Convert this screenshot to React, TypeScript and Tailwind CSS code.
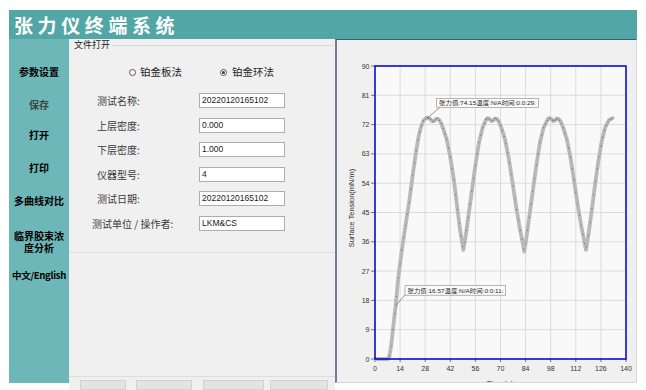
import React from "react";

const KP: [number, number][] = [
  [0, 0], [7.3, 0], [8, 0.8], [9, 4], [10, 9], [11.5, 16.3], [13, 25], [15, 33.5], [17, 41], [19, 48],
  [21.4, 58], [23, 64], [24.2, 68], [25.5, 71], [27, 73.2], [28.8, 74.15], [30, 74], [31, 73.6], [32, 73],
  [33, 73.1], [34, 73.7], [35, 73.8], [36, 73.3], [37, 72.3], [38, 70.8], [40, 67.5], [42, 62], [44, 55],
  [46, 46], [47.5, 39.5], [49.3, 33.5], [50.5, 37.5], [52, 43.5], [54, 51.5], [56, 59.5], [58, 66.5],
  [60, 71], [62, 73.6], [63, 74], [64, 73.6], [65, 73.1], [66, 73.3], [67, 73.9], [68, 73.7], [69, 73],
  [70.5, 71], [72.5, 67.5], [74.5, 62], [76.5, 55], [78.5, 47.5], [80.5, 41], [83.3, 33], [84.5, 37.5],
  [86, 43.5], [88, 51.5], [90, 59.5], [92, 66.5], [94, 71], [96.5, 73.8], [97.5, 74], [98.5, 73.6],
  [99.5, 73.1], [100.5, 73.3], [101.5, 73.9], [102.5, 73.7], [103.5, 73], [105, 71], [107, 67.5],
  [109, 62], [111, 55], [113, 47.5], [115, 41], [117.7, 33.5], [119, 38], [120.5, 44], [122.5, 52.5],
  [124.5, 60.5], [126.5, 67], [128.5, 71.3], [130.5, 73.4], [132.5, 74],
];

const X = (t: number) => 375 + (t * 251) / 140;
const Y = (v: number) => 359 - (v * 293) / 90;

function interp(t: number) {
  for (let i = 0; i < KP.length - 1; i++) {
    const [t0, v0] = KP[i];
    const [t1, v1] = KP[i + 1];
    if (t >= t0 && t <= t1) return v0 + ((v1 - v0) * (t - t0)) / (t1 - t0);
  }
  return KP[KP.length - 1][1];
}

const linePts = KP.map(([t, v]) => `${X(t).toFixed(2)},${Y(v).toFixed(2)}`).join(" ");
const dots: number[] = [];
for (let t = 0; t <= 132; t += 1) dots.push(t);

function Chart() {
  const yTicks = [0, 9, 18, 27, 36, 45, 54, 63, 72, 81, 90];
  const xTicks = [0, 14, 28, 42, 56, 70, 84, 98, 112, 126, 140];
  const font = "'Liberation Sans', 'Noto Sans CJK SC', sans-serif";
  return (
    <svg width={299} height={342} viewBox="337 40 299 342" className="block" style={{ fontFamily: font }}>
      <rect x={375} y={66} width={251} height={293} fill="#f9f9f9" />
      {xTicks.map((t) => (
        <line key={"gx" + t} x1={X(t)} x2={X(t)} y1={66} y2={359} stroke="#dcdcdc" strokeWidth={1} />
      ))}
      {yTicks.map((v) => (
        <line key={"gy" + v} x1={375} x2={626} y1={Y(v)} y2={Y(v)} stroke="#dcdcdc" strokeWidth={1} />
      ))}
      {yTicks.map((v) => (
        <g key={"ly" + v}>
          <line x1={371} x2={375} y1={Y(v)} y2={Y(v)} stroke="#555" strokeWidth={0.8} />
          <text x={369.5} y={Y(v) + 2.5} fontSize={7} fill="#333" textAnchor="end">
            {v}
          </text>
        </g>
      ))}
      {xTicks.map((t) => (
        <g key={"lx" + t}>
          <line x1={X(t)} x2={X(t)} y1={359} y2={362} stroke="#555" strokeWidth={0.8} />
          <text x={X(t)} y={370.8} fontSize={7} fill="#333" textAnchor="middle">
            {t}
          </text>
        </g>
      ))}
      <polyline points={linePts} fill="none" stroke="#b8b8b8" strokeWidth={3.8} strokeLinejoin="round" strokeLinecap="round" />
      {dots.map((t) => (
        <circle key={"d" + t} cx={X(t)} cy={Y(interp(t))} r={0.6} fill="#6e6e6e" />
      ))}
      <rect x={375} y={66} width={251} height={293} fill="none" stroke="#0000d0" strokeWidth={1.5} />

      <line x1={440} y1={107.3} x2={427} y2={118.3} stroke="#555" strokeWidth={0.6} />
      <rect x={436.7} y={98.3} width={101.6} height={9} fill="#fbfbfb" stroke="#888" strokeWidth={0.6} />
      <text x={439} y={105.2} fontSize={6} fill="#222" textLength={97} lengthAdjust="spacingAndGlyphs">
        张力值:74.15温度:N/A时间:0:0:29:
      </text>

      <line x1={407.7} y1={291.5} x2={395.7} y2={306} stroke="#555" strokeWidth={0.6} />
      <rect x={405} y={285.7} width={100.7} height={9.5} fill="#fbfbfb" stroke="#888" strokeWidth={0.6} />
      <text x={407.5} y={292.8} fontSize={6} fill="#222" textLength={96} lengthAdjust="spacingAndGlyphs">
        张力值:16.57温度:N/A时间:0:0:11:
      </text>

      <text x={352.5} y={208} fontSize={7.5} fill="#333" textAnchor="middle" transform="rotate(-90 352.5 208)" dominantBaseline="middle">
        Surface Tension(mN/m)
      </text>
      <text x={500} y={386} fontSize={8} fill="#333" textAnchor="middle">
        Time(s)
      </text>
    </svg>
  );
}

function Radio({ checked }: { checked?: boolean }) {
  return (
    <span className="w-[7px] h-[7px] rounded-full border border-[#555] bg-white flex items-center justify-center shrink-0">
      {checked && <span className="w-[3px] h-[3px] rounded-full bg-[#333]" />}
    </span>
  );
}

const rows: { label: string; value: string; last?: boolean }[] = [
  { label: "测试名称:", value: "20220120165102" },
  { label: "上层密度:", value: "0.000" },
  { label: "下层密度:", value: "1.000" },
  { label: "仪器型号:", value: "4" },
  { label: "测试日期:", value: "20220120165102" },
  { label: "测试单位 / 操作者:", value: "LKM&CS", last: true },
];

export default function App() {
  return (
    <div className="w-[646px] h-[390px] bg-white overflow-hidden font-['Noto_Sans_CJK_SC',sans-serif]">
      <div className="ml-[9px] pt-[10px] w-[628px]">
        <header className="h-[29px] bg-[#53a6a6] flex items-center pl-[5px]">
          <h1 className="text-white text-[19px] font-bold tracking-[4.6px] leading-none">张力仪终端系统</h1>
        </header>
        <div className="flex h-[351px] items-start">
          <nav className="w-[60px] h-[344px] bg-[#6db7b8] flex flex-col items-center text-[10px] font-bold leading-[12px] text-black text-center">
            <div className="mt-[27px]">参数设置</div>
            <div className="mt-[21px] text-[#3c4646]">保存</div>
            <div className="mt-[18px]">打开</div>
            <div className="mt-[21px]">打印</div>
            <div className="mt-[21px]">多曲线对比</div>
            <div className="mt-[22.5px] flex flex-col items-center">
              <span className="leading-[12.5px]">临界胶束浓</span>
              <span className="leading-[12.5px]">度分析</span>
            </div>
            <div className="mt-[14px] whitespace-nowrap text-[9.5px] tracking-[-0.3px]">中文/English</div>
          </nav>

          <main className="w-[266px] h-[351px] bg-[#f0f0f0] flex flex-col overflow-hidden">
            <div className="h-[12px] flex items-center pl-[5px]">
              <span className="text-[9px] leading-[12px] text-[#222]">文件打开</span>
              <span className="flex-1 h-px bg-[#dadada] ml-[2px] mr-[2px]" />
            </div>
            <div className="mt-[14px] h-[14px] flex items-center pl-[60px] text-[10.5px] text-[#222]">
              <Radio />
              <span className="ml-[4px] leading-[14px]">铂金板法</span>
              <span className="ml-[38px]">
                <Radio checked />
              </span>
              <span className="ml-[5px] leading-[14px]">铂金环法</span>
            </div>
            <div className="mt-[14px] flex flex-col gap-y-[9.5px]">
              {rows.map((r) => (
                <div key={r.label} className="h-[15px] flex items-center pl-[28px]">
                  <span
                    className={
                      r.last
                        ? "-ml-[5px] w-[107px] text-[10px] leading-[15px] text-[#3a3a3a]"
                        : "w-[102px] text-[10px] leading-[15px] text-[#3a3a3a]"
                    }
                  >
                    {r.label}
                  </span>
                  <div className="w-[86px] h-[15px] bg-white border border-[#adadad] pl-[2px] flex items-center text-[8.5px] text-[#1a1a1a] font-['Liberation_Sans',sans-serif]">
                    {r.value}
                  </div>
                </div>
              ))}
            </div>
            <div className="mt-[21.5px] h-px bg-[#e0e0e0]" />
            <div className="mt-[123px] h-px bg-[#dddddd]" />
            <div className="mt-[4px] h-[14px] flex pl-[11px]">
              <div className="w-[46px] h-full bg-[#e3e3e3] border border-[#d2d2d2]" />
              <div className="ml-[10px] w-[56px] h-full bg-[#e3e3e3] border border-[#d2d2d2]" />
              <div className="ml-[10.5px] w-[61px] h-full bg-[#e3e3e3] border border-[#d2d2d2]" />
              <div className="ml-[6.5px] w-[58px] h-full bg-[#e3e3e3] border border-[#d2d2d2]" />
            </div>
          </main>

          <section className="w-[302px] h-[344px] bg-[#f0f0f0] border-l-2 border-l-[#6e7f98] border-t border-t-[#2f6470] border-r border-r-[#d8d8d8] border-b border-b-[#d8d8d8] overflow-hidden">
            <Chart />
          </section>
        </div>
      </div>
    </div>
  );
}
